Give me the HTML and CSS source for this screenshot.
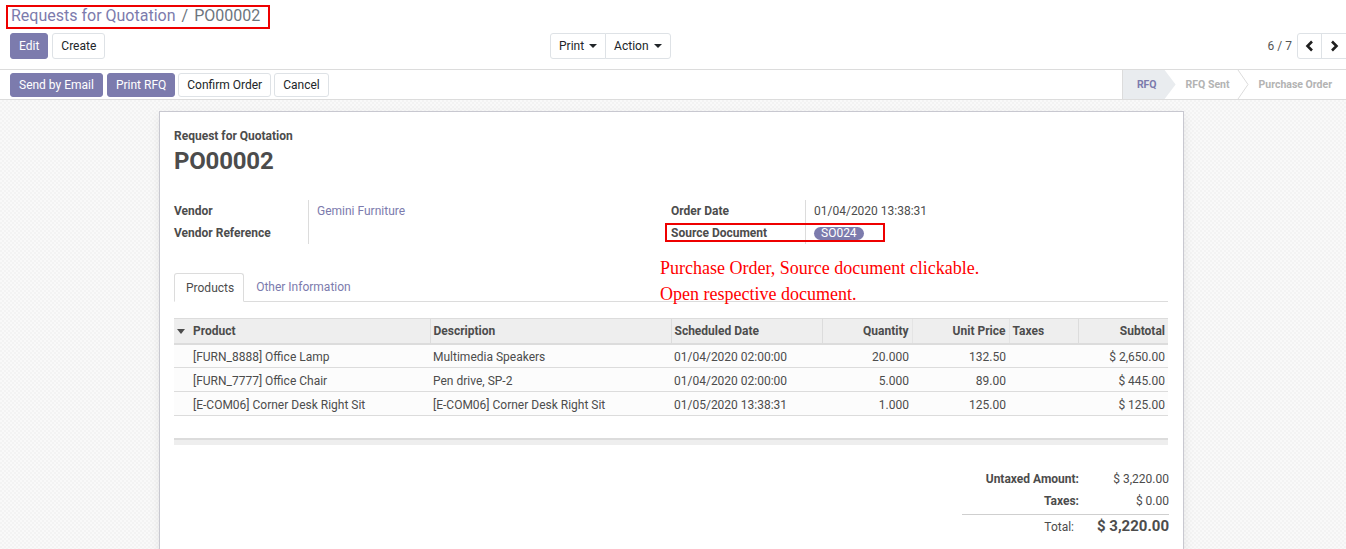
FILE: index.html
```html
<!DOCTYPE html>
<html>
<head>
<meta charset="utf-8">
<link rel="stylesheet" href="styles.css">
</head>
<body>
<div class="cp">
  <div class="crumbs"><a class="crumb-link">Requests for Quotation</a><span class="crumb-sep">/</span><span class="crumb-active">PO00002</span></div>
  <div class="cp-row">
    <div class="cp-left">
      <button class="btn btn-primary">Edit</button>
      <button class="btn">Create</button>
    </div>
    <div class="btn-group">
      <button class="btn btn-dd">Print <span class="caret"></span></button>
      <button class="btn btn-dd">Action <span class="caret"></span></button>
    </div>
    <div class="pager">
      <span class="pager-val">6 / 7</span>
      <div class="btn-group pager-btns">
        <button class="btn btn-icon"><svg width="10" height="12" viewBox="0 0 10 12"><polyline points="7,1.5 2.5,6 7,10.5" fill="none" stroke="#1f1f1f" stroke-width="2.6"/></svg></button>
        <button class="btn btn-icon"><svg width="10" height="12" viewBox="0 0 10 12"><polyline points="3,1.5 7.5,6 3,10.5" fill="none" stroke="#1f1f1f" stroke-width="2.6"/></svg></button>
      </div>
    </div>
  </div>
</div>
<div class="statusrow">
  <div class="sb-buttons">
    <button class="btn btn-primary btn-sm">Send by Email</button>
    <button class="btn btn-primary btn-sm">Print RFQ</button>
    <button class="btn btn-sm">Confirm Order</button>
    <button class="btn btn-sm">Cancel</button>
  </div>
  <div class="statusbar">
    <div class="st st-active">RFQ</div>
    <div class="st st-mid">RFQ Sent</div>
    <svg class="st-sep" width="12" height="29" viewBox="0 0 12 29"><polyline points="1,0 11,14.5 1,29" fill="none" stroke="#dcdcdc" stroke-width="1"/></svg>
    <div class="st st-last">Purchase Order</div>
  </div>
</div>
<div class="content">
  <div class="sheet">
    <div class="title-small">Request for Quotation</div>
    <h1 class="title">PO00002</h1>
    <div class="groups">
      <div class="group">
        <div class="g-row"><div class="g-label">Vendor</div><div class="g-val link">Gemini Furniture</div></div>
        <div class="g-row"><div class="g-label">Vendor Reference</div><div class="g-val"></div></div>
      </div>
      <div class="group">
        <div class="g-row"><div class="g-label">Order Date</div><div class="g-val">01/04/2020 13:38:31</div></div>
        <div class="g-row"><div class="g-label">Source Document</div><div class="g-val"><span class="badge">SO024</span></div></div>
      </div>
    </div>
    <div class="tabs">
      <div class="tab tab-active">Products</div>
      <div class="tab">Other Information</div>
    </div>
    <table class="lines">
      <colgroup>
        <col class="c-handle"><col class="c-product"><col class="c-desc"><col class="c-date"><col class="c-qty"><col class="c-price"><col class="c-tax"><col class="c-sub">
      </colgroup>
      <thead>
        <tr>
          <th class="th-handle"><span class="sort-caret"></span></th>
          <th>Product</th><th>Description</th><th>Scheduled Date</th><th class="num">Quantity</th><th class="num">Unit Price</th><th>Taxes</th><th class="num">Subtotal</th>
        </tr>
      </thead>
      <tbody>
        <tr><td></td><td>[FURN_8888] Office Lamp</td><td>Multimedia Speakers</td><td>01/04/2020 02:00:00</td><td class="num">20.000</td><td class="num">132.50</td><td></td><td class="num">$ 2,650.00</td></tr>
        <tr><td></td><td>[FURN_7777] Office Chair</td><td>Pen drive, SP-2</td><td>01/04/2020 02:00:00</td><td class="num">5.000</td><td class="num">89.00</td><td></td><td class="num">$ 445.00</td></tr>
        <tr><td></td><td>[E-COM06] Corner Desk Right Sit</td><td>[E-COM06] Corner Desk Right Sit</td><td>01/05/2020 13:38:31</td><td class="num">1.000</td><td class="num">125.00</td><td></td><td class="num">$ 125.00</td></tr>
        <tr class="spacer"><td colspan="8"></td></tr>
      </tbody>
      <tfoot><tr><td colspan="8"></td></tr></tfoot>
    </table>
    <div class="totals">
      <div class="t-row"><div class="t-label">Untaxed Amount:</div><div class="t-val">$ 3,220.00</div></div>
      <div class="t-row"><div class="t-label">Taxes:</div><div class="t-val">$ 0.00</div></div>
      <div class="t-row t-total"><div class="t-label">Total:</div><div class="t-val">$ 3,220.00</div></div>
    </div>
  </div>
</div>
<div class="anno anno-box1"></div>
<div class="anno anno-box2"></div>
<div class="anno anno-text">Purchase Order, Source document clickable.<br>Open respective document.</div>
</body>
</html>
```
FILE: styles.css
```css
* { box-sizing: border-box; }
html, body { margin: 0; padding: 0; }
body {
  font-family: Roboto, "Liberation Sans", sans-serif;
  font-size: 12px;
  color: #4c4c4c;
  background: #fff;
  width: 1346px;
  height: 549px;
  overflow: hidden;
  position: relative;
}
.cp { padding-top: 4px; border-bottom: 1px solid #dcdcdc; }
.crumbs { padding-left: 11px; font-size: 16px; line-height: 24px; height: 24px; }
.crumb-link { color: #7c7bad; }
.crumb-sep { color: #6c757d; margin: 0 6px; }
.crumb-active { color: #6c757d; }
.cp-row { display: flex; align-items: center; margin-top: 5px; padding-left: 10px; height: 26px; margin-bottom: 10px; }
.cp-left { display: flex; gap: 4px; width: 540px; }
.btn {
  font-family: inherit; font-size: 12px; color: #212529;
  background: #fff; border: 1px solid #dee2e6; border-radius: 3px;
  height: 26px; padding: 0 8px; line-height: 24px; cursor: pointer; margin: 0;
}
.btn-primary { background: #7c7bad; border-color: #7c7bad; color: #fff; }
.btn-sm { height: 24px; line-height: 22px; padding: 0 8px; }
.btn-group { display: flex; }
.btn-group .btn { border-radius: 0; }
.btn-group .btn:first-child { border-radius: 3px 0 0 3px; }
.btn-group .btn:last-child { border-radius: 0 3px 3px 0; margin-left: -1px; }
.btn-dd { padding: 0 8px; }
.caret { display: inline-block; width: 0; height: 0; border-left: 4px solid transparent; border-right: 4px solid transparent; border-top: 4px solid #212529; vertical-align: 2px; margin-left: 2px; }
.pager { margin-left: auto; display: flex; align-items: center; }
.pager-val { color: #555; margin-right: 5px; }
.btn-icon { width: 25px; padding: 0; display: flex; align-items: center; justify-content: center; }
.pager-btns .btn:last-child { border-radius: 0; border-right: none; }

.statusrow { display: flex; align-items: center; height: 30px; border-bottom: 1px solid #dcdcdc; padding-left: 10px; }
.sb-buttons { display: flex; gap: 3px; }
.sb-buttons .btn:nth-child(2) { margin-left: 1px; }
.statusbar { margin-left: auto; display: flex; align-items: stretch; height: 29px; border-left: 1px solid #dcdcdc; }
.st { font-size: 10.5px; font-weight: bold; color: #b3b3b3; display: flex; align-items: center; }
.st-active {
  background: #e9ecef; color: #7c7bad; padding: 0 19px 0 14px;
  clip-path: polygon(0 0, calc(100% - 11px) 0, 100% 50%, calc(100% - 11px) 100%, 0 100%);
}
.st-mid { padding: 0 7px 0 10px; }
.st-sep { display: block; }
.st-last { padding: 0 14px 0 10px; }

.content {
  height: 600px;
  background-color: #f7f7f7;
  background-image: repeating-conic-gradient(#f3f3f3 0 25%, #f9f9f9 0 50%);
  background-size: 4px 4px;
  padding-top: 11px;
  padding-left: 159px;
}
.sheet {
  width: 1025px; background: #fff; border: 1px solid #c8c8d0;
  box-shadow: 0 4px 10px rgba(0,0,0,0.08);
  padding: 14px 15px 40px 14px; min-height: 500px;
}
.title-small { font-weight: bold; font-size: 12px; line-height: 20px; }
.title { font-size: 24px; font-weight: bold; margin: 0; line-height: 30px; color: #4c4c4c; letter-spacing: -0.2px; }
.groups { display: flex; margin-top: 24px; }
.group { width: 497px; }
.g-row { display: flex; height: 22px; align-items: center; }
.g-label { font-weight: bold; width: 135px; flex: none; height: 100%; display: flex; align-items: center; border-right: 1px solid #dcdcdc; color: #4c4c4c; }
.g-val { padding-left: 8px; }
.link { color: #7c7bad; }
.badge { display: inline-block; background: #7c7bad; color: #fff; border-radius: 8px; padding: 0 7px; line-height: 13px; font-size: 12px; }

.tabs { display: flex; margin-top: 29px; border-bottom: 1px solid #dcdcdc; height: 29px; }
.tab { padding: 0 12px; line-height: 28px; color: #7c7bad; }
.tab-active { color: #4c4c4c; border: 1px solid #dcdcdc; border-bottom: 1px solid #fff; border-radius: 3px 3px 0 0; margin-bottom: -1px; background: #fff; height: 29px; padding: 0 9px 0 11px; }

.lines { margin-top: 16px; width: 994px; border-collapse: collapse; table-layout: fixed; }
.c-handle { width: 16px; } .c-product { width: 240px; } .c-desc { width: 241px; } .c-date { width: 151px; }
.c-qty { width: 90px; } .c-price { width: 97px; } .c-tax { width: 69px; } .c-sub { width: 90px; }
.lines th { background: #eeeeee; font-weight: bold; text-align: left; height: 25px; padding: 0 3px; border-top: 1px solid #dcdcdc; border-bottom: 2px solid #dcdcdc; border-left: 1px solid #dcdcdc; white-space: nowrap; }
.lines th:first-child, .lines th:nth-child(2) { border-left: none; }
.lines th:nth-child(6), .lines th:nth-child(7) { border-left: 1px solid #e4e4e4; }
.lines .num { text-align: right; }
.lines td { height: 24px; padding: 2px 3px 0; border-bottom: 1px solid #dcdcdc; white-space: nowrap; overflow: hidden; background: #fcfcfc; }
.sort-caret { display: inline-block; width: 0; height: 0; border-left: 4px solid transparent; border-right: 4px solid transparent; border-top: 5px solid #4c4c4c; vertical-align: 1px; }
.lines th.th-handle { padding: 0 0 0 3px; }
.lines tr.spacer td { height: 23px; border-bottom: none; background: #fff; }
.lines tfoot td { height: 6px; background: #eee; border-top: 2px solid #dcdcdc; border-bottom: none; padding: 0; }

.totals { margin-left: auto; width: 207px; margin-top: 23px; margin-right: -1px; }
.t-row { display: flex; justify-content: flex-end; height: 22px; align-items: center; }
.t-label { font-weight: bold; text-align: right; width: 117px; }
.t-val { width: 90px; text-align: right; }
.t-total { border-top: 1px solid #cfcfcf; margin-top: 2px; height: 24px; }
.t-total .t-label { font-weight: normal; padding-top: 2px; padding-right: 5px; }
.t-total .t-val { font-weight: bold; font-size: 15px; }

.anno { position: absolute; }
.anno-box1 { left: 6px; top: 5px; width: 264px; height: 24px; border: 2px solid #e00; }
.anno-box2 { left: 665px; top: 223px; width: 220px; height: 19px; border: 2px solid #e00; }
.anno-text { left: 660px; top: 255px; font-family: "Liberation Serif", serif; font-size: 18px; line-height: 26px; color: #f00; }
```
